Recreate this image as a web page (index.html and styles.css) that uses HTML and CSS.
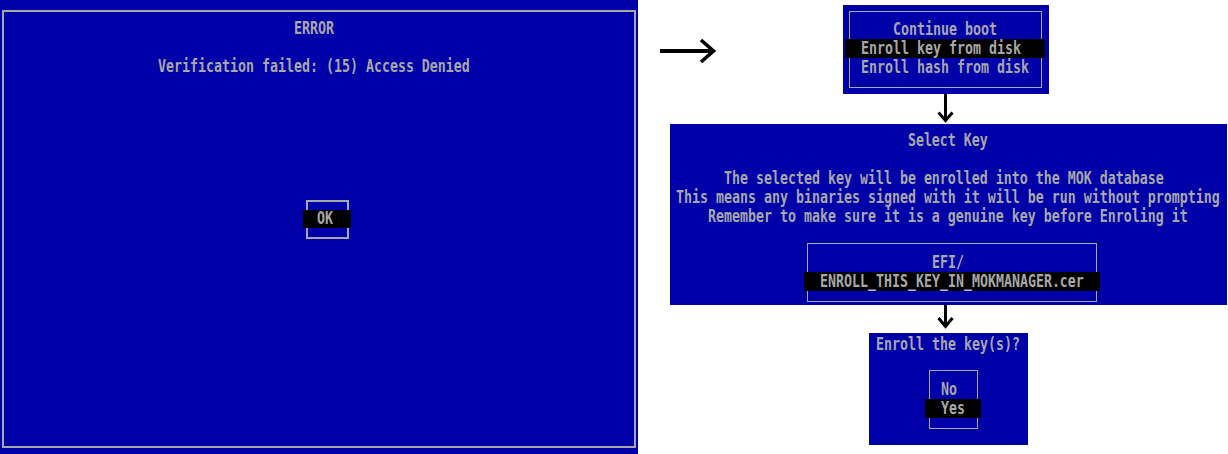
FILE: index.html
```html
<!DOCTYPE html>
<html>
<head>
<meta charset="utf-8">
<title>MokManager</title>
<link rel="stylesheet" href="styles.css">
</head>
<body>
<div class="page">
  <section class="screen blue">
    <div class="screen-frame">
      <div class="msg">
        <div class="line"><span class="t">                 ERROR</span></div>
        <div class="line"></div>
        <div class="line"><span class="t">Verification failed: (15) Access Denied</span></div>
      </div>
      <div class="ok-box">
        <div class="ok-sel sel"><span class="t">OK</span></div>
      </div>
    </div>
  </section>

  <div class="flow">
    <div class="top-row">
      <svg class="arrow-right" width="58" height="26" viewBox="0 0 58 26">
        <path d="M1 13H54" stroke="#000" stroke-width="4" fill="none"/>
        <path d="M42 2L54.5 13L42 24" stroke="#000" stroke-width="3.6" fill="none"/>
      </svg>
      <div class="menu blue">
        <div class="menu-frame">
          <div class="line row-m"><span class="t">      Continue boot</span></div>
          <div class="line row-m sel"><span class="t">  Enroll key from disk</span></div>
          <div class="line row-m"><span class="t">  Enroll hash from disk</span></div>
        </div>
      </div>
    </div>

    <svg class="arrow-down down-1" width="17" height="30" viewBox="0 0 17 30">
      <path d="M8.5 0V26" stroke="#000" stroke-width="3" fill="none"/>
      <path d="M1.5 18.5L8.5 26.5L15.5 18.5" stroke="#000" stroke-width="3" fill="none"/>
    </svg>

    <div class="select blue">
      <div class="line"><span class="t">                             Select Key</span></div>
      <div class="line"></div>
      <div class="line"><span class="t">      The selected key will be enrolled into the MOK database</span></div>
      <div class="line"><span class="t">This means any binaries signed with it will be run without prompting</span></div>
      <div class="line"><span class="t">    Remember to make sure it is a genuine key before Enroling it</span></div>
      <div class="file-frame">
        <div class="line row-f"><span class="t">                EFI/</span></div>
        <div class="line row-f sel"><span class="t">  ENROLL_THIS_KEY_IN_MOKMANAGER.cer</span></div>
      </div>
    </div>

    <svg class="arrow-down down-2" width="17" height="28" viewBox="0 0 17 28">
      <path d="M8.5 0V21" stroke="#000" stroke-width="3" fill="none"/>
      <path d="M1.5 13L8.5 21.5L15.5 13" stroke="#000" stroke-width="3" fill="none"/>
    </svg>

    <div class="confirm blue">
      <div class="line"><span class="t">Enroll the key(s)?</span></div>
      <div class="confirm-frame">
        <div class="line row-c"><span class="t">  No</span></div>
        <div class="line row-c sel"><span class="t">  Yes</span></div>
      </div>
    </div>
  </div>
</div>
</body>
</html>
```

FILE: styles.css
```css
* {
  box-sizing: border-box;
}

html,
body {
  margin: 0;
  padding: 0;
  background: #ffffff;
}

body {
  width: 1228px;
  height: 454px;
  overflow: hidden;
  font-family: "DejaVu Sans Mono", "Liberation Mono", monospace;
  font-size: 13.29px;
  font-weight: bold;
  color: #a8a8a8;
}

.page {
  display: flex;
  align-items: flex-start;
  height: 454px;
}

.blue {
  background: #0000a8;
}

.sel {
  background: #000000;
}

.line {
  height: 19px;
  line-height: 19px;
  white-space: pre;
}

.t {
  display: inline-block;
  transform: scaleY(1.3);
}

/* left error screen */
.screen {
  flex: none;
  width: 638px;
  height: 454px;
  padding: 10px 0 0 2px;
}

.screen-frame {
  width: 634px;
  height: 438px;
  border: 2px solid #a8a8a8;
  padding-top: 7px;
}

.msg {
  padding-left: 154px;
}

.ok-box {
  margin: 124px 0 0 302px;
  width: 43px;
  height: 39px;
  border: 2px solid #a8a8a8;
  padding-top: 8px;
}

.ok-sel {
  margin-left: -5px;
  width: 48px;
  height: 18px;
  line-height: 18px;
  padding-left: 14px;
  white-space: pre;
}

/* right flow */
.flow {
  flex: none;
  width: 590px;
  display: flex;
  flex-direction: column;
  align-items: flex-start;
}

.top-row {
  display: flex;
  align-items: flex-start;
}

.arrow-right {
  display: block;
  margin: 38px 0 0 21px;
}

.menu {
  margin: 5px 0 0 126px;
  width: 206px;
  height: 89px;
  padding: 6px 7px 6px 6px;
}

.menu-frame {
  width: 193px;
  border: 1px solid #a8a8a8;
  padding: 8px 0 10px;
}

.row-m {
  margin: 0 -4px 0 -5px;
}

.arrow-down {
  display: block;
  margin-left: 299px;
}

.select {
  margin-left: 32px;
  width: 557px;
  height: 181px;
  padding: 7px 0 0 6px;
}

.file-frame {
  margin: 17px 0 0 131px;
  width: 290px;
  border: 1px solid #a8a8a8;
  padding: 9px 0 10px;
}

.row-f {
  margin: 0 -4px;
}

.confirm {
  margin-left: 231px;
  width: 159px;
  height: 112px;
  padding: 2px 0 0 7px;
}

.confirm-frame {
  margin: 16px 0 0 53px;
  width: 49px;
  border: 1px solid #a8a8a8;
  padding: 9px 0 10px;
}

.row-c {
  margin: 0 -4px 0 -5px;
}
```
